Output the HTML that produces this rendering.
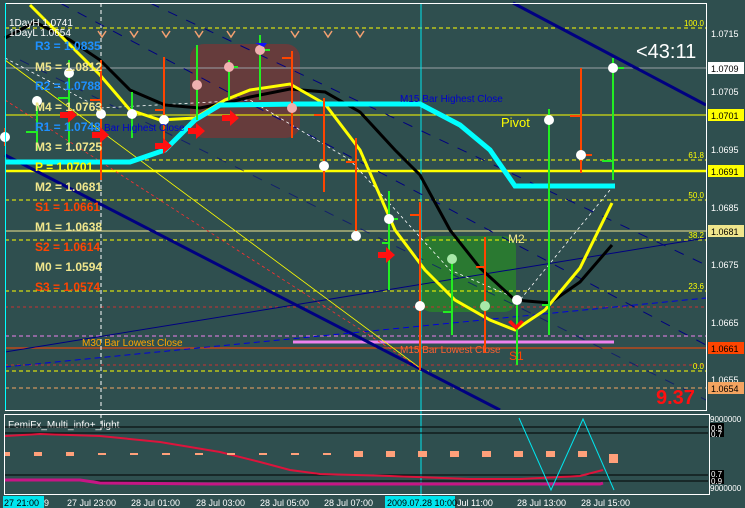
<!DOCTYPE html>
<html><head><meta charset="utf-8"><style>
html,body{margin:0;padding:0;background:#2f4f4f;width:745px;height:508px;overflow:hidden}
svg{display:block;font-family:"Liberation Sans",sans-serif}
</style></head><body>
<svg width="745" height="508" viewBox="0 0 745 508" xmlns="http://www.w3.org/2000/svg">
<rect width="745" height="508" fill="#2f4f4f"/>
<!-- boxes -->
<rect x="190" y="44" width="110" height="94" rx="14" fill="#7a3535" opacity="0.75"/>
<rect x="420" y="236" width="96" height="76" rx="12" fill="#2a7d2e" opacity="0.9"/>
<!-- horizontal levels -->
<g stroke-width="1">
<line x1="5" y1="28" x2="706" y2="28" stroke="#ffff00" stroke-dasharray="4,3"/>
<line x1="5" y1="68" x2="706" y2="68" stroke="#9aa0a6"/>
<line x1="5" y1="115" x2="706" y2="115" stroke="#ffff00"/>
<line x1="5" y1="160" x2="706" y2="160" stroke="#ffff00" stroke-dasharray="4,3"/>
<line x1="5" y1="171" x2="706" y2="171" stroke="#ffff00" stroke-width="2.5"/>
<line x1="5" y1="200" x2="706" y2="200" stroke="#ffff00" stroke-dasharray="4,3"/>
<line x1="5" y1="231" x2="706" y2="231" stroke="#f0e68c"/>
<line x1="5" y1="240" x2="706" y2="240" stroke="#ffff00" stroke-dasharray="4,3"/>
<line x1="5" y1="291" x2="706" y2="291" stroke="#ffff00" stroke-dasharray="4,3"/>
<line x1="5" y1="307" x2="706" y2="307" stroke="#c83030" stroke-dasharray="3,3"/>
<line x1="5" y1="336" x2="706" y2="336" stroke="#ee82ee" stroke-dasharray="4,3"/>
<line x1="5" y1="348" x2="706" y2="348" stroke="#ff4500"/>
<line x1="5" y1="365" x2="706" y2="365" stroke="#c83030" stroke-dasharray="3,3"/>
<line x1="5" y1="371" x2="706" y2="371" stroke="#ffff00" stroke-dasharray="4,3"/>
<line x1="5" y1="388" x2="706" y2="388" stroke="#f4a460" stroke-dasharray="4,3"/>
</g>
<line x1="293" y1="342" x2="614" y2="342" stroke="#ee82ee" stroke-width="3"/>
<!-- verticals -->
<line x1="101" y1="3" x2="101" y2="410" stroke="#fff" stroke-dasharray="4,3"/>
<line x1="421" y1="3" x2="421" y2="508" stroke="#00e5ee"/>
<!-- blue channels -->
<g stroke="#000080" fill="none">
<line x1="5" y1="155" x2="500" y2="410" stroke-width="3"/>
<line x1="513" y1="3" x2="706" y2="105" stroke-width="3"/>
<line x1="5" y1="352" x2="706" y2="238"/>
<line x1="5" y1="367" x2="706" y2="298" stroke="#0000dd" stroke-dasharray="6,4"/>
<line x1="60" y1="3" x2="706" y2="345" stroke-dasharray="10,10"/>
<line x1="150" y1="3" x2="706" y2="265" stroke-dasharray="10,10"/>
<line x1="20" y1="60" x2="706" y2="400" stroke-dasharray="10,10" opacity="0.6"/>
</g>
<line x1="5" y1="60" x2="420" y2="368" stroke="#ffff00" stroke-width="0.8"/>
<line x1="5" y1="100" x2="420" y2="368" stroke="#ff3030" stroke-width="0.8" stroke-dasharray="3,3"/>
<polyline points="5,58 100,108 250,100 350,160 450,270 520,300 610,190" fill="none" stroke="#fff" stroke-dasharray="3,3" stroke-width="0.8"/>
<!-- MAs -->
<polyline points="5,38 35,22 70,40 100,60 130,90 165,105 200,108 230,102 250,97 290,89 325,92 360,112 395,150 420,175 450,230 480,268 515,300 550,303 580,282 612,245" fill="none" stroke="#000" stroke-width="3"/>
<polyline points="30,5 65,40 100,75 130,110 160,120 195,118 225,100 250,90 290,84 325,104 360,150 395,230 425,270 455,300 490,320 515,330 545,310 580,268 612,203" fill="none" stroke="#ffff00" stroke-width="3"/>
<polyline points="5,162 130,162 165,150 195,120 220,105 300,104 420,104 460,125 490,150 515,186 615,186" fill="none" stroke="#00ffff" stroke-width="5"/>
<!-- candles -->
<g stroke-width="2">
<g stroke="#ff4500"><line x1="5" y1="128" x2="5" y2="146"/><line x1="101" y1="60" x2="101" y2="180"/><line x1="164" y1="57" x2="164" y2="140"/><line x1="292" y1="51" x2="292" y2="138"/><line x1="324" y1="98" x2="324" y2="192"/><line x1="356" y1="138" x2="356" y2="236"/><line x1="420" y1="202" x2="420" y2="370"/><line x1="485" y1="237" x2="485" y2="353"/><line x1="581" y1="68" x2="581" y2="173"/>
<line x1="90" y1="100" x2="101" y2="100"/><line x1="155" y1="110" x2="164" y2="110"/><line x1="282" y1="58" x2="292" y2="58"/><line x1="314" y1="115" x2="324" y2="115"/><line x1="346" y1="162" x2="356" y2="162"/><line x1="410" y1="215" x2="420" y2="215"/><line x1="476" y1="267" x2="485" y2="267"/><line x1="570" y1="116" x2="581" y2="116"/><line x1="581" y1="155" x2="592" y2="155"/></g>
<g stroke="#22ee22"><line x1="37" y1="96" x2="37" y2="150"/><line x1="69" y1="60" x2="69" y2="145"/><line x1="132" y1="92" x2="132" y2="138"/><line x1="197" y1="45" x2="197" y2="120"/><line x1="229" y1="60" x2="229" y2="100"/><line x1="260" y1="35" x2="260" y2="100"/><line x1="389" y1="191" x2="389" y2="290"/><line x1="452" y1="260" x2="452" y2="335"/><line x1="517" y1="305" x2="517" y2="365"/><line x1="549" y1="109" x2="549" y2="335"/><line x1="613" y1="58" x2="613" y2="180"/>
<line x1="26" y1="132" x2="37" y2="132"/><line x1="58" y1="98" x2="69" y2="98"/><line x1="382" y1="243" x2="389" y2="243"/><line x1="389" y1="219" x2="398" y2="219"/><line x1="443" y1="312" x2="452" y2="312"/><line x1="542" y1="305" x2="549" y2="305"/><line x1="613" y1="68" x2="624" y2="68"/><line x1="602" y1="161" x2="613" y2="161"/><line x1="229" y1="67" x2="238" y2="67"/><line x1="260" y1="50" x2="270" y2="50"/></g>
</g>
<g fill="#fff"><circle cx="5" cy="137" r="5"/><circle cx="37" cy="101" r="5"/><circle cx="69" cy="73" r="5"/><circle cx="101" cy="114" r="5"/><circle cx="132" cy="114" r="5"/><circle cx="164" cy="120" r="5"/><circle cx="324" cy="166" r="5"/><circle cx="356" cy="236" r="5"/><circle cx="389" cy="219" r="5"/><circle cx="420" cy="306" r="5"/><circle cx="517" cy="300" r="5"/><circle cx="549" cy="120" r="5"/><circle cx="581" cy="155" r="5"/><circle cx="613" cy="68" r="5"/></g>
<g fill="#f0b0b0"><circle cx="197" cy="85" r="5"/><circle cx="229" cy="67" r="5"/><circle cx="260" cy="50" r="5"/><circle cx="292" cy="108" r="5"/></g>
<g fill="#a8e8a8"><circle cx="452" cy="259" r="5"/><circle cx="485" cy="306" r="5"/></g>
<!-- red arrows -->
<g fill="#ff1010">
<path d="M60,112h8v-5l9,8-9,8v-5h-8z"/><path d="M92,132h8v-5l9,8-9,8v-5h-8z"/><path d="M155,143h8v-5l9,8-9,8v-5h-8z"/><path d="M188,128h8v-5l9,8-9,8v-5h-8z"/><path d="M222,115h8v-5l9,8-9,8v-5h-8z"/><path d="M378,252h8v-5l9,8-9,8v-5h-8z"/><path d="M508,322l8,8 8,-8-3,-2-5,5-5,-5z"/>
</g>
<!-- chevrons top -->
<g fill="none" stroke="#f4a070" stroke-width="1.5"><path d="M98,31l4,6 4,-6M130,31l4,6 4,-6M162,31l4,6 4,-6M195,31l4,6 4,-6M227,31l4,6 4,-6M291,31l4,6 4,-6M324,31l4,6 4,-6M356,31l4,6 4,-6"/></g>
<path d="M255,43h12l-3,4z" fill="#1010ff"/>
<!-- pivot text -->
<g font-weight="bold" font-size="12">
<text x="35" y="50" fill="#1e90ff">R3 = 1.0835</text>
<text x="35" y="71" fill="#f0e68c">M5 = 1.0812</text>
<text x="35" y="90" fill="#1e90ff">R2 = 1.0788</text>
<text x="35" y="111" fill="#f0e68c">M4 = 1.0763</text>
<text x="35" y="131" fill="#1e90ff">R1 = 1.0748</text>
<text x="35" y="151" fill="#f0e68c">M3 = 1.0725</text>
<text x="35" y="171" fill="#ffff00">P  = 1.0701</text>
<text x="35" y="191" fill="#f0e68c">M2 = 1.0681</text>
<text x="35" y="211" fill="#ff4500">S1 = 1.0661</text>
<text x="35" y="231" fill="#f0e68c">M1 = 1.0638</text>
<text x="35" y="251" fill="#ff4500">S2 = 1.0614</text>
<text x="35" y="271" fill="#f0e68c">M0 = 1.0594</text>
<text x="35" y="291" fill="#ff4500">S3 = 1.0574</text>
</g>
<g font-size="10" fill="#fff"><text x="9" y="26">1DayH 1.0741</text><text x="9" y="36">1DayL 1.0654</text></g>
<text x="104" y="131" font-size="10" fill="#0000cd">Bar Highest Close</text>
<text x="400" y="102" font-size="10" fill="#0000cd">M15 Bar Highest Close</text>
<text x="82" y="346" font-size="10" fill="#ffa500">M30 Bar Lowest Close</text>
<text x="400" y="353" font-size="10" fill="#ff6030">M15 Bar Lowest Close</text>
<text x="501" y="127" font-size="13" fill="#ffff00">Pivot</text>
<text x="508" y="243" font-size="12" fill="#f0e68c">M2</text>
<text x="509" y="360" font-size="12" fill="#ff4500">S1</text>
<text x="636" y="58" font-size="20" fill="#fff">&lt;43:11</text>
<text x="656" y="404" font-size="20" font-weight="bold" fill="#ff1010">9.37</text>
<!-- fib labels -->
<g font-size="8" fill="#ffff00" text-anchor="end"><text x="704" y="26">100.0</text><text x="704" y="158">61.8</text><text x="704" y="198">50.0</text><text x="704" y="238">38.2</text><text x="704" y="289">23.6</text><text x="704" y="369">0.0</text></g>
<!-- frames -->
<rect x="5.5" y="3.5" width="701" height="407" fill="none" stroke="#fff"/>
<line x1="5.5" y1="3" x2="5.5" y2="410" stroke="#00ffff"/>
<!-- right axis -->
<g font-size="9" fill="#fff"><text x="711" y="37">1.0715</text><text x="711" y="95">1.0705</text><text x="711" y="153">1.0695</text><text x="711" y="211">1.0685</text><text x="711" y="268">1.0675</text><text x="711" y="326">1.0665</text><text x="711" y="383">1.0655</text></g>
<g font-size="9">
<rect x="708" y="62" width="36" height="12" fill="#fff"/><text x="711" y="72" fill="#000">1.0709</text>
<rect x="708" y="109" width="36" height="12" fill="#ffff00"/><text x="711" y="119" fill="#000">1.0701</text>
<rect x="708" y="165" width="36" height="12" fill="#ffff00"/><text x="711" y="175" fill="#000">1.0691</text>
<rect x="708" y="225" width="36" height="12" fill="#f0e68c"/><text x="711" y="235" fill="#000">1.0681</text>
<rect x="708" y="342" width="36" height="12" fill="#ff4500"/><text x="711" y="352" fill="#000">1.0661</text>
<rect x="708" y="382" width="36" height="12" fill="#f4a460"/><text x="711" y="392" fill="#000">1.0654</text>
</g>
<!-- indicator window -->
<rect x="4.5" y="414.5" width="705" height="80" fill="#2f4f4f" stroke="#fff"/>
<line x1="421" y1="415" x2="421" y2="494" stroke="#00e5ee"/>
<line x1="101" y1="415" x2="101" y2="430" stroke="#fff" stroke-dasharray="3,3"/>
<text x="8" y="428" font-size="10" fill="#fff">FemiFx_Multi_info+_light</text>
<g stroke="#000"><line x1="5" y1="427" x2="708" y2="427"/><line x1="5" y1="433" x2="708" y2="433"/><line x1="5" y1="475" x2="708" y2="475"/><line x1="5" y1="481" x2="708" y2="481"/></g>
<polyline points="5,436 40,434 100,436 160,442 220,452 260,462 290,470 320,474 390,476 470,479 520,479 580,476 603,470" fill="none" stroke="#dc143c" stroke-width="2"/>
<polyline points="5,480 80,480 100,483 210,484 600,484 603,483" fill="none" stroke="#c71585" stroke-width="3"/>
<g fill="#ffa07a"><rect x="5" y="452" width="5" height="4"/><rect x="34" y="452" width="8" height="4"/><rect x="66" y="452" width="8" height="4"/><rect x="98" y="453" width="8" height="2"/><rect x="130" y="453" width="8" height="2"/><rect x="162" y="453" width="8" height="2"/><rect x="195" y="453" width="8" height="2"/><rect x="227" y="453" width="8" height="2"/><rect x="259" y="453" width="8" height="2"/><rect x="291" y="453" width="8" height="2"/><rect x="323" y="453" width="8" height="2"/><rect x="354" y="451" width="9" height="6"/><rect x="386" y="451" width="9" height="6"/><rect x="418" y="451" width="9" height="6"/><rect x="450" y="451" width="9" height="6"/><rect x="482" y="451" width="9" height="6"/><rect x="514" y="451" width="9" height="6"/><rect x="546" y="451" width="9" height="6"/><rect x="578" y="451" width="9" height="6"/><rect x="609" y="454" width="9" height="9"/></g>
<polyline points="519,418 551,490 583,419 614,490" fill="none" stroke="#00e5ee"/>
<g font-size="8"><rect x="710" y="423" width="14" height="14" fill="#000"/><text x="711" y="431" fill="#fff">0.9</text><text x="711" y="437" fill="#fff">0.7</text>
<rect x="710" y="470" width="14" height="14" fill="#000"/><text x="711" y="477" fill="#fff">0.7</text><text x="711" y="484" fill="#fff">0.9</text>
<text x="710" y="422" fill="#fff">9000000</text><text x="710" y="491" fill="#fff">9000000</text></g>
<!-- time axis -->
<g font-size="9" fill="#fff">
<rect x="3" y="496" width="41" height="12" fill="#00e5ee"/><text x="4" y="506" fill="#000">27 21:00</text><text x="44" y="506">9</text>
<text x="67" y="506">27 Jul 23:00</text><text x="131" y="506">28 Jul 01:00</text><text x="196" y="506">28 Jul 03:00</text><text x="260" y="506">28 Jul 05:00</text><text x="324" y="506">28 Jul 07:00</text>
<rect x="385" y="496" width="70" height="12" fill="#00e5ee"/><text x="387" y="506" fill="#000">2009.07.28 10:00</text>
<text x="457" y="506">Jul 11:00</text><text x="517" y="506">28 Jul 13:00</text><text x="581" y="506">28 Jul 15:00</text>
</g>
</svg>
</body></html>
